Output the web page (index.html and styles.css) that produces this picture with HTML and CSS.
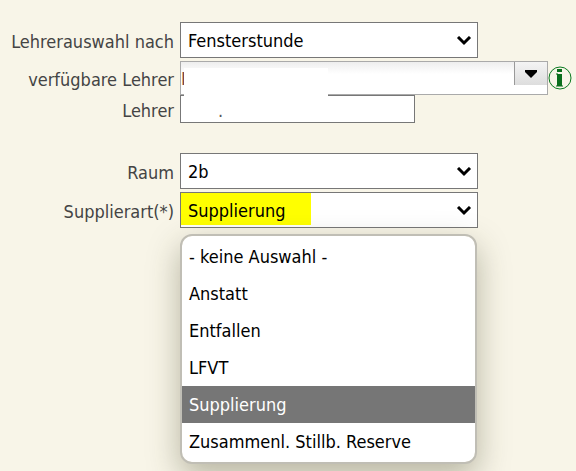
FILE: index.html
```html
<!DOCTYPE html>
<html lang="de">
<head>
  <meta charset="UTF-8">
  <meta name="viewport" content="width=device-width, initial-scale=1.0">
  <title>Supplierung</title>
  <link rel="stylesheet" href="styles.css">
</head>
<body>
  <form class="form">
    <div class="row">
      <label for="auswahl">Lehrerauswahl nach</label>
      <div class="field">
        <select id="auswahl" class="control">
          <option>Fensterstunde</option>
        </select>
        <svg class="arrow" viewBox="0 0 16 10"><path d="M2 1l6 6 6-6"/></svg>
      </div>
    </div>

    <div class="row row-tight">
      <label for="verfuegbar">verfügbare Lehrer</label>
      <div class="combo-line">
        <div class="combo">
          <input type="text" id="verfuegbar" class="combo-input" value="I">
          <button type="button" class="combo-button" aria-label="Lehrer anzeigen">
            <svg viewBox="0 0 12 8"><path d="M0 0h12v2L6 8 0 2z"/></svg>
          </button>
          <span class="cover"></span>
        </div>
        <svg class="info" viewBox="0 0 24 24">
          <circle cx="12" cy="12" r="11"/>
          <path d="M9 3h5v3H9zM9 8h5v12H9z"/>
          <path class="serif" d="M8 8h2M8 20h7"/>
        </svg>
      </div>
    </div>

    <div class="row row-last">
      <label for="lehrer">Lehrer</label>
      <input type="text" id="lehrer" class="control text" value=".">
    </div>

    <div class="row">
      <label for="raum">Raum</label>
      <div class="field">
        <select id="raum" class="control">
          <option>2b</option>
        </select>
        <svg class="arrow" viewBox="0 0 16 10"><path d="M2 1l6 6 6-6"/></svg>
      </div>
    </div>

    <div class="row">
      <label for="art">Supplierart(*)</label>
      <div class="field">
        <select id="art" class="control marked">
          <option>Supplierung</option>
        </select>
        <svg class="arrow" viewBox="0 0 16 10"><path d="M2 1l6 6 6-6"/></svg>
        <ul class="menu" role="listbox" aria-label="Supplierart">
          <li role="option">- keine Auswahl -</li>
          <li role="option">Anstatt</li>
          <li role="option">Entfallen</li>
          <li role="option">LFVT</li>
          <li role="option" class="active" aria-selected="true">Supplierung</li>
          <li role="option">Zusammenl. Stillb. Reserve</li>
        </ul>
      </div>
    </div>
  </form>
</body>
</html>
```

FILE: styles.css
```css
* {
  box-sizing: border-box;
}

body {
  margin: 0;
  min-height: 100vh;
  overflow: hidden;
  background-color: #f8f5e8;
  color: #000;
  font-family: "DejaVu Sans Condensed", Tahoma, sans-serif;
  font-size: 18px;
}

.form {
  padding-top: 22px;
}

.row {
  display: grid;
  grid-template-columns: 174px 1fr;
  column-gap: 6px;
  align-items: center;
  margin-bottom: 3px;
}

.row-tight {
  margin-bottom: 0;
}

.row-last {
  margin-bottom: 30px;
}

label {
  padding-top: 3px;
  color: #444;
  line-height: 24px;
  text-align: right;
  white-space: nowrap;
}

.field {
  position: relative;
  max-width: 298px;
}

.control {
  display: block;
  width: 100%;
  height: 36px;
  padding: 0 7px;
  border: 1px solid #777;
  border-radius: 0;
  background-color: #fff;
  color: #000;
  font: inherit;
  appearance: none;
}

.marked {
  background-image: linear-gradient(#ff0, #ff0);
  background-repeat: no-repeat;
  background-size: 130px 32px;
}

.text {
  max-width: 235px;
  height: 28px;
  padding: 3px 7px 0 37px;
  color: #555;
}

.arrow {
  position: absolute;
  top: 14px;
  right: 6px;
  width: 16px;
  height: 10px;
  fill: none;
  stroke: #000;
  stroke-width: 3;
  pointer-events: none;
}

.combo-line {
  display: flex;
  align-items: center;
}

.combo {
  position: relative;
  display: flex;
  align-items: flex-start;
  flex: 0 1 368px;
  height: 34px;
  border: 1px solid #aaa;
  background: linear-gradient(#eee, #fff 12px);
}

.combo-input {
  flex: 1;
  min-width: 0;
  height: 32px;
  padding: 0;
  border: 0;
  background: none;
  color: #743;
  font: inherit;
}

.combo-button {
  display: flex;
  align-items: center;
  justify-content: center;
  width: 33px;
  height: 23px;
  padding: 0;
  border: 0;
  border-left: 1px solid #999;
  background: linear-gradient(#f4f4f4, #ddd);
}

.combo-button svg {
  width: 12px;
  height: 8px;
}

/* blanks out the teacher names */
.cover {
  position: absolute;
  top: 6px;
  left: 3px;
  width: 144px;
  height: 42px;
  background-color: #fff;
}

.info {
  flex: none;
  width: 24px;
  height: 24px;
  fill: #0a6e1c;
}

.info circle {
  fill: none;
  stroke: #0a7a20;
  stroke-width: 1;
}

.info .serif {
  stroke: #0a6e1c;
  stroke-width: 1;
}

.menu {
  position: absolute;
  top: 42px;
  left: 0;
  right: 1px;
  margin: 0;
  padding: 2px 0;
  border: 2px solid #c0beb5;
  border-radius: 12px;
  background-color: #fff;
  background-clip: padding-box;
  box-shadow: 0 12px 32px rgba(60, 60, 30, 0.35);
  list-style: none;
}

.menu li {
  padding: 0 7px;
  line-height: 37px;
  white-space: nowrap;
}

.menu .active {
  background-color: #767676;
  color: #fff;
}
```
